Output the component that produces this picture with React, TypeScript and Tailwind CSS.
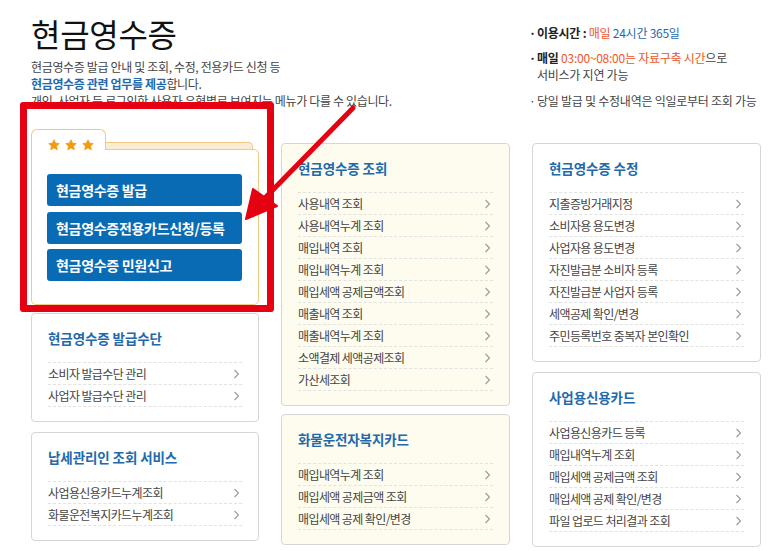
import React from "react";

const Chevron = () => (
  <svg width="7" height="10" viewBox="0 0 7 10" className="shrink-0">
    <polyline points="1.5,1 5.5,5 1.5,9" fill="none" stroke="#9a9a9a" strokeWidth="1.1" />
  </svg>
);

const Star = () => (
  <svg width="12" height="12" viewBox="0 0 24 24">
    <path
      d="M12 1.5l3.2 6.9 7.3.8-5.5 5 1.6 7.3L12 17.8l-6.6 3.7L7 14.2l-5.5-5 7.3-.8z"
      fill="#f29a0e"
      stroke="#f29a0e"
      strokeWidth="1.5"
      strokeLinejoin="round"
    />
  </svg>
);

type CardProps = { title: string; items: string[]; cream?: boolean; className?: string };

const Card = ({ title, items, cream, className }: CardProps) => (
  <div
    className={
      "border border-[#d6d6d6] rounded-[4px] px-[16px] pt-[15px] pb-[14px] " +
      (cream ? "bg-[#fdfcef] " : "bg-white ") +
      (className ?? "")
    }
  >
    <div className="h-[18px] leading-[18px] text-[13.5px] font-bold text-[#2269ab] tracking-[-0.1px] mb-[15px] whitespace-nowrap">
      {title}
    </div>
    <div className="border-b border-dashed border-[#e2e2e2]">
      {items.map((t) => (
        <div
          key={t}
          className="h-[22px] flex items-center justify-between border-t border-dashed border-[#e2e2e2] pr-[2px]"
        >
          <span className="text-[12px] text-[#444] tracking-[-0.6px] leading-[21px] whitespace-nowrap">{t}</span>
          <Chevron />
        </div>
      ))}
    </div>
  </div>
);

export default function App() {
  return (
    <div className="relative w-[773px] h-[551px] bg-white overflow-hidden font-['Noto_Sans_CJK_KR','Noto_Sans',sans-serif] text-[#333]">
      {/* Header */}
      <div className="flex px-[31px] h-[109px]">
        <div className="w-[498px] shrink-0 pt-[13px]">
          <h1 className="text-[32px] leading-[40px] text-[#111] tracking-[-0.3px] font-normal">현금영수증</h1>
          <div className="mt-[5px] text-[12px] leading-[17px] text-[#444] tracking-[-0.35px] whitespace-nowrap">
            <div>현금영수증 발급 안내 및 조회, 수정, 전용카드 신청 등</div>
            <div>
              <span className="font-bold text-[#1e6aae]">현금영수증 관련 업무를 제공</span>합니다.
            </div>
            <div>개인, 사업자 등 로그인한 사용자 유형별로 보여지는 메뉴가 다를 수 있습니다.</div>
          </div>
        </div>
        <div className="shrink-0 pt-[24px] text-[12px] leading-[17px] tracking-[-0.25px] text-[#444] whitespace-nowrap">
          <div className="flex">
            <span className="w-[8px] font-bold text-[#222]">·</span>
            <span>
              <span className="font-bold text-[#222]">이용시간 : </span>
              <span className="text-[#f0562a]">매일</span>
              <span className="text-[#1e6aae]"> 24시간 365일</span>
            </span>
          </div>
          <div className="flex mt-[8px]">
            <span className="w-[8px] font-bold text-[#222]">·</span>
            <span>
              <span className="font-bold text-[#222]">매일 </span>
              <span className="text-[#f0562a]">03:00~08:00는 자료구축 시간</span>으로
              <br />
              서비스가 지연 가능
            </span>
          </div>
          <div className="flex mt-[9px]">
            <span className="w-[8px]">·</span>
            <span>당일 발급 및 수정내역은 익일로부터 조회 가능</span>
          </div>
        </div>
      </div>

      {/* Columns */}
      <div className="grid grid-cols-[228px_229px_229px] gap-x-[22px] px-[31px] mt-[19px] items-start">
        {/* Left column */}
        <div>
          <div>
            <div className="flex items-end h-[21px]">
              <div className="relative z-10 -mb-px w-[75px] h-[21px] border border-b-0 border-[#f1c886] rounded-t-[6px] bg-white flex items-start gap-[5px] pl-[16px] pt-[9px]">
                <Star />
                <Star />
                <Star />
              </div>
              <div className="flex-1 h-[7px] mr-[6px] border-t border-r border-[#f1c886] rounded-tr-[5px] bg-[#fbecd3]" />
            </div>
            <div className="border border-[#f1c886] rounded-b-[5px] rounded-tr-[5px] bg-white pl-[15px] pr-[16px] pt-[24px] pb-[23px] flex flex-col">
              <div className="h-[32px] rounded-[3px] bg-[#0a6bb5] text-white font-bold text-[14px] tracking-[-0.3px] flex items-center pl-[9px] whitespace-nowrap">
                현금영수증 발급
              </div>
              <div className="mt-[6px] h-[32px] rounded-[3px] bg-[#0a6bb5] text-white font-bold text-[14px] tracking-[-0.3px] flex items-center pl-[9px] whitespace-nowrap">
                현금영수증전용카드신청/등록
              </div>
              <div className="mt-[5px] h-[32px] rounded-[3px] bg-[#0a6bb5] text-white font-bold text-[14px] tracking-[-0.3px] flex items-center pl-[9px] whitespace-nowrap">
                현금영수증 민원신고
              </div>
            </div>
          </div>
          <Card className="mt-[8px]" title="현금영수증 발급수단" items={["소비자 발급수단 관리", "사업자 발급수단 관리"]} />
          <Card className="mt-[10px]" title="납세관리인 조회 서비스" items={["사업용신용카드누계조회", "화물운전복지카드누계조회"]} />
        </div>

        {/* Middle column */}
        <div className="mt-[15px]">
          <Card
            cream
            title="현금영수증 조회"
            items={[
              "사용내역 조회",
              "사용내역누계 조회",
              "매입내역 조회",
              "매입내역누계 조회",
              "매입세액 공제금액조회",
              "매출내역 조회",
              "매출내역누계 조회",
              "소액결제 세액공제조회",
              "가산세조회",
            ]}
          />
          <Card
            cream
            className="mt-[8px]"
            title="화물운전자복지카드"
            items={["매입내역누계 조회", "매입세액 공제금액 조회", "매입세액 공제 확인/변경"]}
          />
        </div>

        {/* Right column */}
        <div className="mt-[15px]">
          <Card
            title="현금영수증 수정"
            items={[
              "지출증빙거래지정",
              "소비자용 용도변경",
              "사업자용 용도변경",
              "자진발급분 소비자 등록",
              "자진발급분 사업자 등록",
              "세액공제 확인/변경",
              "주민등록번호 중복자 본인확인",
            ]}
          />
          <Card
            className="mt-[10px]"
            title="사업용신용카드"
            items={[
              "사업용신용카드 등록",
              "매입내역누계 조회",
              "매입세액 공제금액 조회",
              "매입세액 공제 확인/변경",
              "파일 업로드 처리결과 조회",
            ]}
          />
        </div>
      </div>

      {/* Annotation overlay: red box */}
      <div className="absolute left-[20px] top-[102px] w-[254px] h-[210px] border-[7px] border-[#e50012] rounded-[3px] pointer-events-none" />

      {/* Annotation overlay: red arrow */}
      <svg className="absolute left-0 top-0 pointer-events-none" width="773" height="551" viewBox="0 0 773 551">
        <line x1="353" y1="108" x2="262" y2="201" stroke="#e50012" strokeWidth="5" strokeLinecap="round" />
        <polygon points="246,219 253,189 277,206" fill="#e50012" stroke="#e50012" strokeWidth="2" strokeLinejoin="round" />
      </svg>
    </div>
  );
}
